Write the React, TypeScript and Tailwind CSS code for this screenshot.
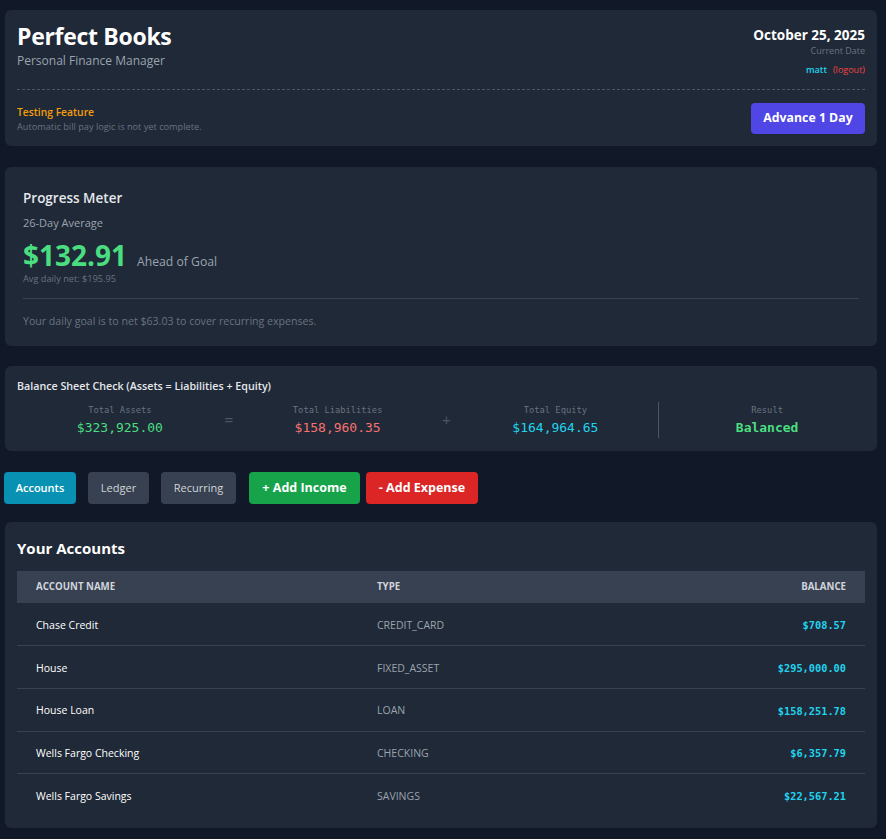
import React from "react";

const sans = { fontFamily: '"Open Sans", "Noto Sans", sans-serif' };
const mono = { fontFamily: '"DejaVu Sans Mono", "Liberation Mono", monospace' };

const accounts = [
  { name: "Chase Credit", type: "CREDIT_CARD", bal: "$708.57" },
  { name: "House", type: "FIXED_ASSET", bal: "$295,000.00" },
  { name: "House Loan", type: "LOAN", bal: "$158,251.78" },
  { name: "Wells Fargo Checking", type: "CHECKING", bal: "$6,357.79" },
  { name: "Wells Fargo Savings", type: "SAVINGS", bal: "$22,567.21" },
];

export default function App() {
  return (
    <div
      className="min-h-[839px] w-[886px] bg-[#111827] pl-[5px] pr-[9px] pt-[10px] pb-[11px]"
      style={sans}
    >
      {/* Header */}
      <div className="rounded-md bg-[#1f2937] px-3 pt-3 pb-3">
        <div className="flex justify-between">
          <div>
            <div className="pt-[1px] text-[23px] font-bold leading-[26px] tracking-[-0.3px] text-white">Perfect Books</div>
            <div className="mt-[4px] text-[12px] leading-[15px] text-[#9ca3af]">Personal Finance Manager</div>
          </div>
          <div className="flex flex-col items-end pt-[3px]">
            <div className="text-[13.5px] font-bold leading-[20px] text-white">October 25, 2025</div>
            <div className="text-[9px] leading-[12px] text-[#6b7280]">Current Date</div>
            <div className="mt-[7px] flex gap-[6px] text-[9px] leading-[12px]">
              <span className="font-semibold text-[#22d3ee]">matt</span>
              <span className="text-[#ef4444]">(logout)</span>
            </div>
          </div>
        </div>
        <div className="mt-[13px] flex items-center justify-between border-t border-dashed border-[#4b5563] pt-[13px]">
          <div>
            <div className="text-[10.3px] font-semibold leading-[15px] text-[#f59e0b]">Testing Feature</div>
            <div className="mt-[1px] text-[9.2px] leading-[12px] text-[#6b7280]">
              Automatic bill pay logic is not yet complete.
            </div>
          </div>
          <button className="h-[31px] w-[114px] rounded-[4px] bg-[#4f46e5] text-[12.3px] font-bold text-white">
            Advance 1 Day
          </button>
        </div>
      </div>

      {/* Progress meter */}
      <div className="mt-[21px] rounded-md bg-[#1f2937] px-[18px] pt-[21px] pb-[17px]">
        <div className="text-[13.5px] font-semibold leading-[20px] text-[#e5e7eb]">Progress Meter</div>
        <div className="mt-[7px] text-[11px] font-medium leading-[16px] text-[#9ca3af]">26-Day Average</div>
        <div className="mt-[8px] flex items-baseline gap-[10px]">
          <span className="text-[28px] font-bold leading-[32px] text-[#4ade80]">$132.91</span>
          <span className="text-[12.2px] text-[#9ca3af]">Ahead of Goal</span>
        </div>
        <div className="mt-[2px] text-[9.2px] leading-[12px] text-[#6b7280]">Avg daily net: $195.95</div>
        <div className="mt-[13px] border-t border-[#374151] pt-[14px] text-[10.6px] leading-[16px] text-[#6b7280]">
          Your daily goal is to net $63.03 to cover recurring expenses.
        </div>
      </div>

      {/* Balance sheet */}
      <div className="mt-[20px] rounded-md bg-[#1f2937] px-3 pt-[12px] pb-[13px]">
        <div className="text-[10.7px] font-semibold leading-[16px] text-[#e5e7eb]">
          Balance Sheet Check (Assets = Liabilities + Equity)
        </div>
        <div
          className="mt-[8px] grid grid-cols-[1fr_12px_1fr_12px_1fr_1px_1fr] items-center text-center"
          style={mono}
        >
          <div>
            <div className="text-[8.75px] leading-[12px] text-[#6b7280]">Total Assets</div>
            <div className="mt-[3px] text-[13px] leading-[18px] text-[#4ade80]">$323,925.00</div>
          </div>
          <div className="text-[14px] text-[#4b5563]">=</div>
          <div>
            <div className="text-[8.75px] leading-[12px] text-[#6b7280]">Total Liabilities</div>
            <div className="mt-[3px] text-[13px] leading-[18px] text-[#f87171]">$158,960.35</div>
          </div>
          <div className="text-[14px] text-[#4b5563]">+</div>
          <div>
            <div className="text-[8.75px] leading-[12px] text-[#6b7280]">Total Equity</div>
            <div className="mt-[3px] text-[13px] leading-[18px] text-[#22d3ee]">$164,964.65</div>
          </div>
          <div className="h-[36px] w-px bg-[#4b5563]" />
          <div className="pl-[10px]">
            <div className="text-[8.75px] leading-[12px] text-[#6b7280]">Result</div>
            <div className="mt-[3px] text-[13px] font-bold leading-[18px] text-[#4ade80]">Balanced</div>
          </div>
        </div>
      </div>

      {/* Buttons */}
      <div className="mt-[21px] -ml-px flex items-center">
        <div className="flex gap-[12px]">
          <button className="h-[32px] w-[72px] rounded-[4px] bg-[#0891b2] text-[11px] font-semibold text-white">
            Accounts
          </button>
          <button className="h-[32px] w-[61px] rounded-[4px] bg-[#374151] text-[11px] font-medium text-[#d1d5db]">
            Ledger
          </button>
          <button className="h-[32px] w-[75px] rounded-[4px] bg-[#374151] text-[11px] font-medium text-[#d1d5db]">
            Recurring
          </button>
        </div>
        <div className="ml-[13px] flex gap-[6px]">
          <button className="h-[32px] w-[111px] rounded-[4px] bg-[#16a34a] text-[12.5px] font-bold text-white">
            + Add Income
          </button>
          <button className="h-[32px] w-[112px] rounded-[4px] bg-[#dc2626] text-[12.5px] font-bold text-white">
            - Add Expense
          </button>
        </div>
      </div>

      {/* Accounts */}
      <div className="mt-[18px] rounded-md bg-[#1f2937] px-3 pt-[15px] pb-[12px]">
        <div className="text-[15px] font-bold leading-[22px] text-white">Your Accounts</div>
        <table className="mt-[12px] w-full table-fixed border-collapse">
          <colgroup>
            <col className="w-[355px]" />
            <col className="w-[250px]" />
            <col />
          </colgroup>
          <thead>
            <tr className="h-[32px] bg-[#374151] text-left text-[9.7px] uppercase text-[#d1d5db]">
              <th className="pl-[19px] font-bold">Account Name</th>
              <th className="pl-[5px] font-bold">Type</th>
              <th className="pr-[19px] text-right font-bold">Balance</th>
            </tr>
          </thead>
          <tbody>
            {accounts.map((a, i) => (
              <tr
                key={a.name}
                className={`h-[42.6px] ${i < accounts.length - 1 ? "border-b border-[#374151]" : ""}`}
              >
                <td className="pl-[19px] pt-[3px] text-[10.5px] font-medium text-white">{a.name}</td>
                <td className="pl-[5px] pt-[3px] text-[10.5px] text-[#9ca3af]">{a.type}</td>
                <td className="pr-[19px] pt-[3px] text-right text-[10.3px] font-semibold text-[#22d3ee]" style={mono}>
                  {a.bal}
                </td>
              </tr>
            ))}
          </tbody>
        </table>
      </div>
    </div>
  );
}
